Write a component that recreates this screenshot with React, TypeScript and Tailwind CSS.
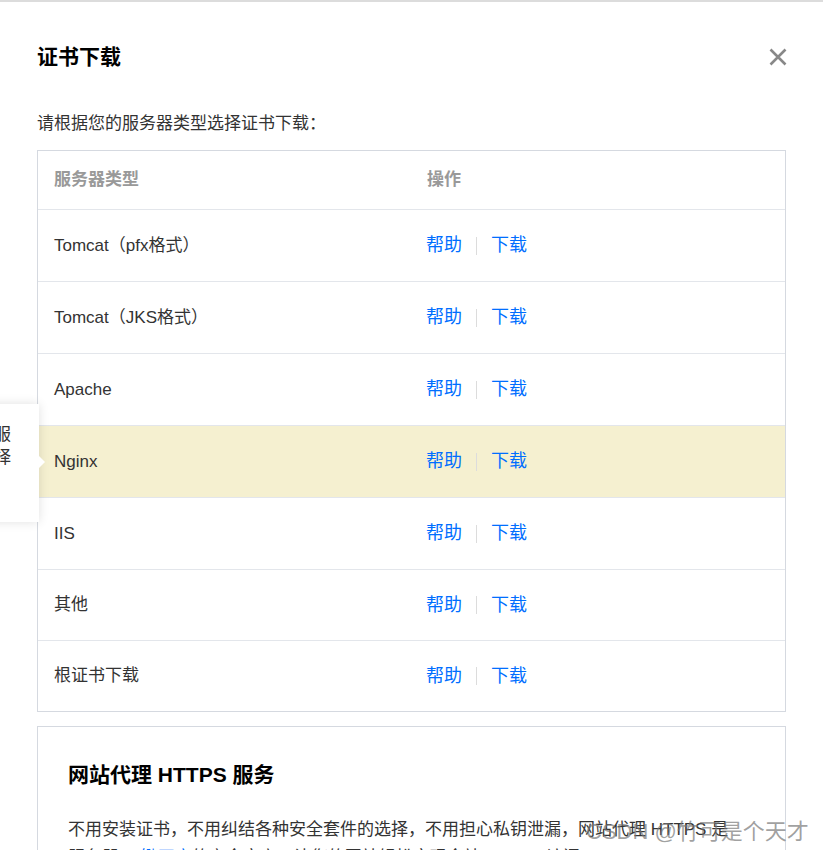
const rows = [
  "Tomcat（pfx格式）",
  "Tomcat（JKS格式）",
  "Apache",
  "Nginx",
  "IIS",
  "其他",
  "根证书下载",
];

function CloseIcon() {
  return (
    <svg width="20" height="20" viewBox="0 0 20 20" className="text-[#888]">
      <path
        d="M2.5 2.5 L17.5 17.5 M17.5 2.5 L2.5 17.5"
        stroke="currentColor"
        strokeWidth="2.6"
        fill="none"
      />
    </svg>
  );
}

export default function App() {
  return (
    <div
      className="relative h-[850px] w-[823px] overflow-hidden border-t-2 border-[#dcdcdc] bg-white text-[17px] text-[#333]"
      style={{ fontFamily: '"Liberation Sans", "Noto Sans CJK SC", sans-serif' }}
    >
      <div className="px-[37px]">
        <div className="flex h-[112px] items-center justify-between pb-[2px]">
          <h1 className="text-[21px] font-bold text-black">证书下载</h1>
          <div className="mr-[-2px]">
            <CloseIcon />
          </div>
        </div>
        <p className="mb-[16px] leading-[20px]">请根据您的服务器类型选择证书下载：</p>

        <div className="border border-[#d5d9e0]">
          <div className="flex h-[58px] items-center font-bold text-[#999]">
            <div className="w-[389px] pl-[16px]">服务器类型</div>
            <div>操作</div>
          </div>
          {rows.map((name, i) => (
            <div
              key={name}
              className={`flex items-center border-t border-[#e3e6eb] ${
                i >= 5 ? "h-[71px]" : "h-[72px]"
              } ${name === "Nginx" ? "bg-[#f5f0d0]" : ""}`}
            >
              <div className="w-[388px] pl-[16px]">{name}</div>
              <div className="flex items-center text-[18px] text-[#006eff]">
                <span>帮助</span>
                <span className="mx-[14px] h-[18px] w-px bg-[#dcdcdc]" />
                <span>下载</span>
              </div>
            </div>
          ))}
        </div>

        <div className="mt-[14px] border border-[#d5d9e0] px-[30px] pt-[35px] pb-[40px]">
          <h2 className="text-[21px] font-bold leading-[26px] text-black">
            网站代理 HTTPS 服务
          </h2>
          <p className="mt-[28px] leading-[28px]">
            不用安装证书，不用纠结各种安全套件的选择，不用担心私钥泄漏，网站代理 HTTPS 是
            <br />
            服务器 <a className="text-[#006eff]">一键开启</a>
            的安全方案，让您的网站轻松实现全站 HTTPS 访问。
          </p>
        </div>
      </div>

      <div className="absolute left-[-200px] top-[402px] h-[118px] w-[239px] bg-white shadow-[0_0_10px_rgba(0,0,0,0.12)]">
        <div className="pr-[28px] pt-[19px] text-right leading-[23px]">
          <div>请根据您的服</div>
          <div>务器类型选择</div>
        </div>
        <div className="absolute right-[-6px] top-[52px] h-0 w-0 border-y-[6px] border-l-[6px] border-y-transparent border-l-white" />
      </div>

      <div className="pointer-events-none absolute left-[586px] top-[815px] text-[22px] leading-[30px] text-[#777]/70">
        CSDN @竹可是个天才
      </div>
    </div>
  );
}
